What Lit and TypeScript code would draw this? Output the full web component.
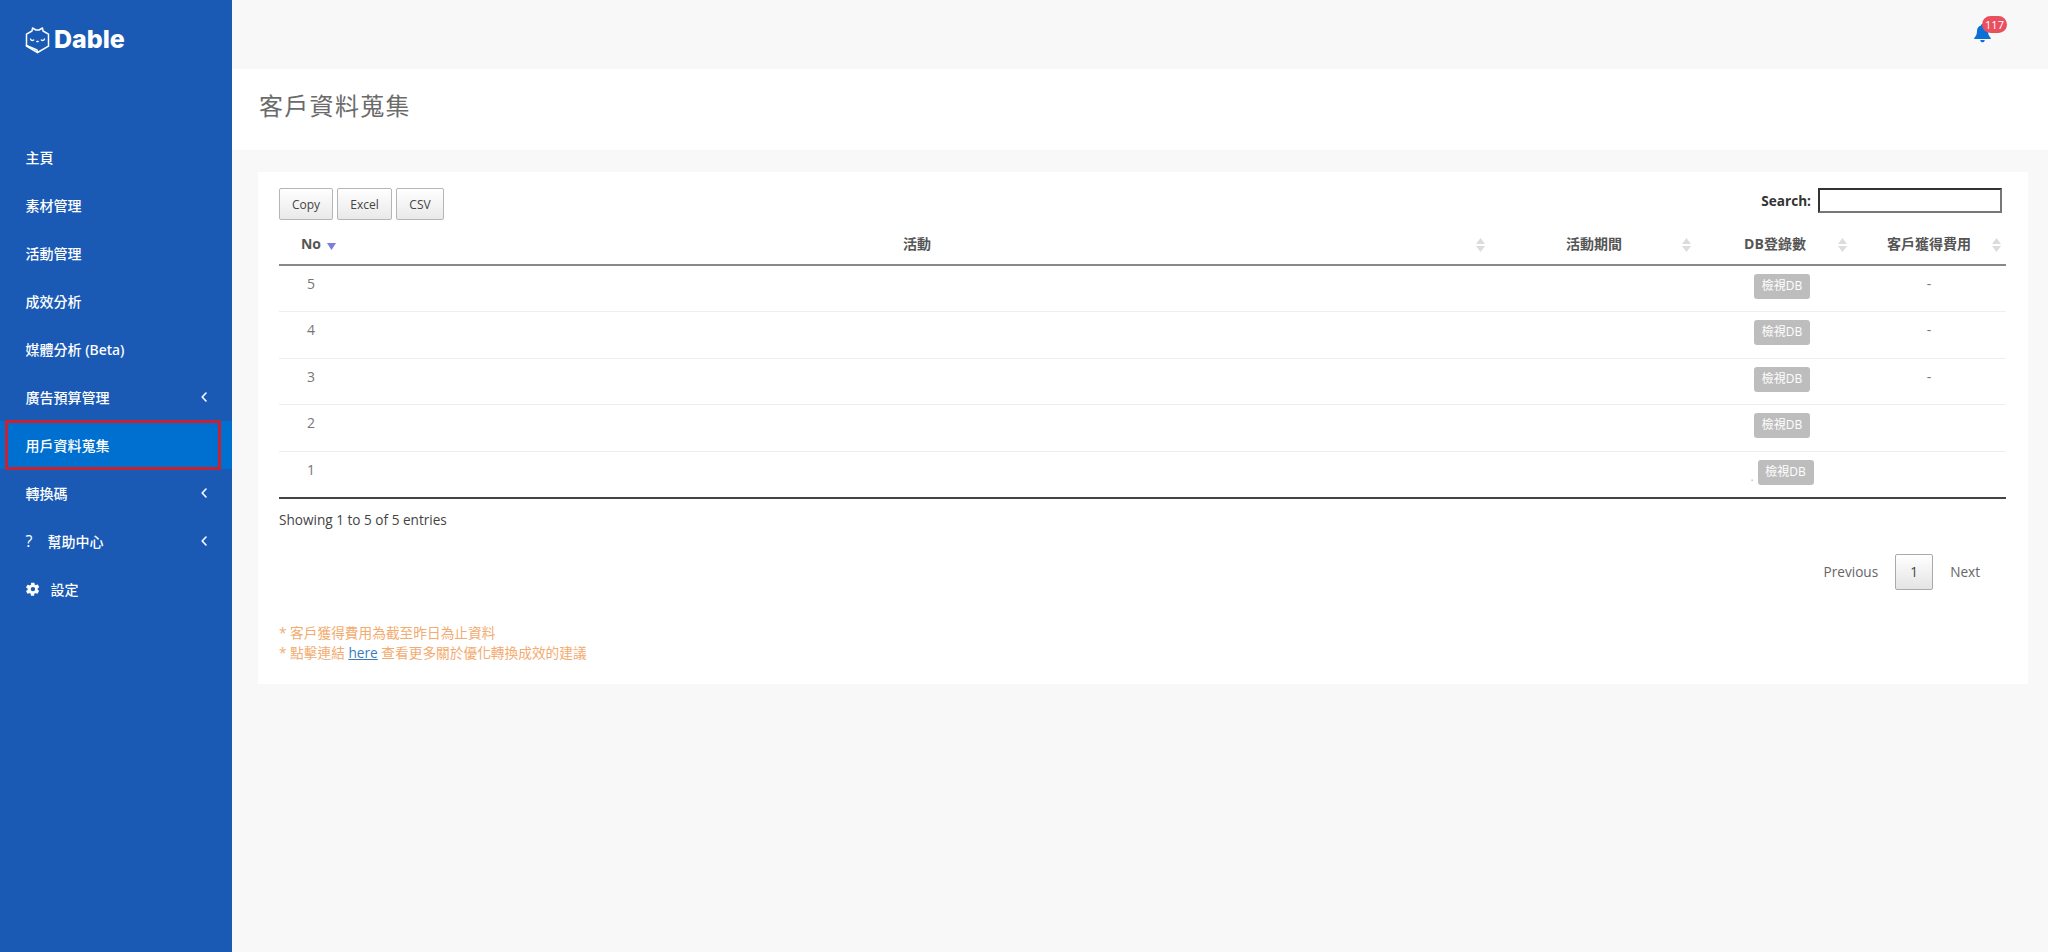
import { LitElement, html, css, svg } from "lit";
import { customElement } from "lit/decorators.js";

const chevron = html`<svg class="chev" viewBox="0 0 6 10" width="6" height="10"><path d="M5 1 1.2 5 5 9" fill="none" stroke="#fff" stroke-width="1.6" stroke-linecap="round" stroke-linejoin="round"/></svg>`;
const gear = html`<svg class="gear" viewBox="0 0 24 24" width="14" height="14"><path fill="#fff" fill-rule="evenodd" d="M22.2 14.6 20 13.4a8.600 8.600 0 0 0 0-2.800l2.200-1.200c.3-.2.400-.5.300-.8a11 11 0 0 0-2.500-4.200.7.700 0 0 0-.8-.1l-2.200 1.200a8.300 8.300 0 0 0-2.400-1.400V2c0-.3-.2-.6-.5-.6a11.300 11.300 0 0 0-4.900 0c-.3 0-.5.300-.5.600v2.500a8.300 8.300 0 0 0-2.400 1.400L3.600 4.700a.7.700 0 0 0-.8.100A11 11 0 0 0 .3 9c-.1.300 0 .6.300.8L2.800 11a8.600 8.600 0 0 0 0 2.800L.6 15c-.3.200-.4.500-.3.800a11 11 0 0 0 2.500 4.200c.2.200.5.300.8.100l2.200-1.200a8.300 8.300 0 0 0 2.400 1.400v2.500c0 .3.200.6.500.6 1.600.4 3.300.4 4.900 0 .3 0 .5-.3.500-.6v-2.500a8.300 8.300 0 0 0 2.400-1.400l2.200 1.200c.3.200.6.100.8-.1a11 11 0 0 0 2.500-4.200c.1-.3 0-.6-.3-.8ZM11.900 16a3.800 3.800 0 1 1 0-7.600 3.800 3.800 0 0 1 0 7.600Z"/></svg>`;
const sortBoth = svg`<path d="M4.500 0 9 6H0Z" fill="#dcdcdc"/><path d="M4.500 14 0 8h9Z" fill="#dcdcdc"/>`;
const sortDesc = svg`<path d="M4.500 7 0 0h9Z" fill="#7d7ddb"/>`;

interface Row { n: number; fee: string; dot?: boolean; }
const rows: Row[] = [
  { n: 5, fee: "-" },
  { n: 4, fee: "-" },
  { n: 3, fee: "-" },
  { n: 2, fee: "" },
  { n: 1, fee: "", dot: true },
];

@customElement("app-root")
export class AppRoot extends LitElement {
  static styles = css`
    :host {
      display: flex;
      width: 2048px;
      height: 952px;
      overflow: hidden;
      background: #f8f8f8;
      font-family: "Open Sans", "Noto Sans CJK TC", sans-serif;
      color: #555;
    }
    .side {
      width: 232px;
      flex: none;
      background: #1a5ab5;
      color: #fff;
      display: flex;
      flex-direction: column;
      font-family: "Noto Sans", "Noto Sans CJK TC", sans-serif;
    }
    .logo {
      height: 132.500px;
      padding: 26px 0 0 25px;
      box-sizing: border-box;
      display: flex;
      align-items: flex-start;
      gap: 4px;
      flex: none;
    }
    .logo span {
      font-family: Inter, sans-serif;
      font-weight: 800;
      font-size: 25px;
      line-height: 26px;
      letter-spacing: 0;
    }
    .item {
      height: 48px;
      box-sizing: border-box;
      display: flex;
      align-items: center;
      padding: 0 25px 0 25.500px;
      font-size: 14px;
      font-weight: 500;
      position: relative;
      flex: none;
    }
    .item .label { flex: 1; }
    .item.active { background: #0070d0; }
    .item.active::after {
      content: "";
      position: absolute;
      left: 5px;
      right: 11px;
      top: -1px;
      bottom: -1px;
      border: 3px solid #c62231;
    }
    .q { width: 22px; font-size: 16px; font-family: "Open Sans", sans-serif; }
    .gear { margin-right: 11px; }
    .main { flex: 1; display: flex; flex-direction: column; min-width: 0; }
    .top {
      height: 69px;
      flex: none;
      box-sizing: border-box;
      display: flex;
      justify-content: flex-end;
      padding: 16px 40px 0 0;
    }
    .bell { position: relative; width: 34px; height: 30px; }
    .bell svg { position: absolute; left: 0; top: 8px; }
    .badge {
      position: absolute;
      left: 8px;
      top: 0;
      width: 25px;
      height: 17px;
      border-radius: 9px;
      background: #e8505f;
      color: #fff;
      font-size: 11px;
      line-height: 17px;
      text-align: center;
    }
    .head {
      height: 81px;
      flex: none;
      background: #fff;
      box-sizing: border-box;
      padding: 0 0 8px 27px;
      display: flex;
      align-items: center;
    }
    h1 {
      margin: 0;
      font-size: 24px;
      font-weight: 400;
      letter-spacing: 1.300px;
      color: #6b6b6b;
      line-height: 1;
    }
    .content { padding: 22px 20px 0 26px; }
    .card {
      background: #fff;
      height: 512px;
      box-sizing: border-box;
      padding: 16px 22px 0 21px;
      font-size: 14px;
    }
    .tools {
      display: flex;
      justify-content: space-between;
      height: 37px;
      padding-right: 4px;
    }
    .btns { display: flex; gap: 4px; }
    .btn {
      height: 32px;
      box-sizing: border-box;
      border: 1px solid #b5b5b5;
      border-radius: 2px;
      background: linear-gradient(#fff, #e9e9e9);
      font-size: 12px;
      color: #444;
      display: flex;
      align-items: center;
      justify-content: center;
    }
    .b1 { width: 54px; }
    .b2 { width: 55px; }
    .b3 { width: 48px; }
    .search { display: flex; align-items: flex-start; gap: 7px; font-weight: 700; color: #333; font-size: 13.600px; }
    .search label { line-height: 25px; }
    .search input {
      width: 184px;
      height: 25px;
      box-sizing: border-box;
      border: 2px solid;
      border-color: #333 #777 #777 #333;
      background: #fff;
      padding: 0;
      margin: 0;
    }
    table {
      width: 1727px;
      border-collapse: collapse;
      table-layout: fixed;
    }
    .w0 { width: 73px; }
    .w1 { width: 1138px; }
    .w2 { width: 222px; }
    .w3 { width: 140px; }
    .w4 { width: 154px; }
    th {
      height: 40px;
      box-sizing: border-box;
      position: relative;
      font-size: 14px;
      font-weight: 700;
      color: #555;
      text-align: center;
      padding: 0 0 3px;
      border-bottom: 2px solid #888;
    }
    th svg { position: absolute; top: 13px; }
    .c0 { padding-right: 9px; }
    .c0 svg { left: 48px; top: 18px; }
    .c1 { padding-right: 8px; }
    .c1 svg { right: 5px; }
    .c2 { padding-right: 14px; }
    .c2 svg { right: 21px; }
    .c3 { padding-right: 14px; }
    .c3 svg { right: 5px; }
    .c4 svg { right: 5px; }
    td {
      height: 46.500px;
      box-sizing: border-box;
      padding: 8px 0 0;
      vertical-align: top;
      text-align: center;
      color: #777;
      font-size: 14px;
      line-height: 19px;
      border-bottom: 1px solid #eee;
    }
    tbody tr:last-child td { border-bottom: 2px solid #444; }
    .num { padding-right: 9px; }
    .fee { padding: 9px 0 0 0; line-height: 18px; }
    .view {
      display: inline-block;
      width: 56px;
      height: 25px;
      box-sizing: border-box;
      background: #bdbdbd;
      color: #fff;
      border-radius: 3px;
      font-size: 12px;
      line-height: 24px;
      text-align: center;
      vertical-align: top;
    }
    .dot { color: #bbb; font-size: 12px; line-height: 34px; margin-right: 4px; }
    .info { font-size: 13.600px; color: #444; margin-top: 11px; line-height: 20px; }
    .pager {
      display: flex;
      justify-content: flex-end;
      align-items: center;
      height: 36px;
      margin-top: 24px;
      padding-right: 26px;
      color: #666;
      font-size: 13.600px;
    }
    .pager .cur {
      width: 38px;
      height: 36px;
      box-sizing: border-box;
      border: 1px solid #aaa;
      border-radius: 2px;
      background: linear-gradient(#fff, #e4e4e4);
      display: flex;
      align-items: center;
      justify-content: center;
      margin: 0 17px;
      color: #444;
    }
    .notes { margin-top: 33px; color: #f3ab70; font-size: 13.700px; line-height: 20px; }
    .notes a { color: #3b7cc0; text-decoration: underline; }
  `;

  render() {
    const menu = ["主頁", "素材管理", "活動管理", "成效分析", "媒體分析 (Beta)"];
    const headers = ["No", "活動", "活動期間", "DB登錄數", "客戶獲得費用"];
    return html`
      <aside class="side">
        <div class="logo">
          <svg width="25" height="28" viewBox="0 0 25 28" fill="none" stroke="#fff" stroke-width="1.500" stroke-linejoin="round" stroke-linecap="round">
            <path d="M7 5 7.500 2 11 4h3l3.500-2L18 5l5.500 3.200v12L12.500 26.500 1.500 20.200v-12Z"/>
            <path d="M1.500 19.500 12 24l.5 2.500"/>
            <path d="M5.500 13c.5 1.500 2 2 3.200 1M19.500 13c-.5 1.500-2 2-3.200 1M11.800 15.500h1.400" stroke-width="1.300"/>
          </svg>
          <span>Dable</span>
        </div>
        ${menu.map((m) => html`<div class="item"><span class="label">${m}</span></div>`)}
        <div class="item"><span class="label">廣告預算管理</span>${chevron}</div>
        <div class="item active"><span class="label">用戶資料蒐集</span></div>
        <div class="item"><span class="label">轉換碼</span>${chevron}</div>
        <div class="item"><span class="q">?</span><span class="label">幫助中心</span>${chevron}</div>
        <div class="item">${gear}<span class="label">設定</span></div>
      </aside>
      <div class="main">
        <div class="top">
          <div class="bell">
            <svg width="17" height="19" viewBox="0 0 17 19"><path fill="#0a6fd6" d="M8.500 0c1 0 1.500.7 1.500 1.500C12.600 2 14 4.300 14 7c0 3.500 1 5 2.700 7 .3.500 0 1-.6 1H.9c-.6 0-.9-.5-.6-1C2 12 3 10.500 3 7c0-2.700 1.400-5 4-5.500C7 .7 7.500 0 8.500 0ZM6.300 16h4.400c0 1.400-1 2.300-2.200 2.300S6.300 17.400 6.300 16Z"/></svg>
            <span class="badge">117</span>
          </div>
        </div>
        <div class="head"><h1>客戶資料蒐集</h1></div>
        <div class="content">
          <div class="card">
            <div class="tools">
              <div class="btns">
                <div class="btn b1">Copy</div>
                <div class="btn b2">Excel</div>
                <div class="btn b3">CSV</div>
              </div>
              <div class="search"><label>Search:</label><input type="text" /></div>
            </div>
            <table>
              <colgroup>
                <col class="w0" /><col class="w1" /><col class="w2" /><col class="w3" /><col class="w4" />
              </colgroup>
              <thead>
                <tr>
                  ${headers.map((h, i) => html`<th class="c${i}">${h}<svg width="9" height="14" viewBox="0 0 9 14">${i === 0 ? sortDesc : sortBoth}</svg></th>`)}
                </tr>
              </thead>
              <tbody>
                ${rows.map((r) => html`
                  <tr>
                    <td class="num">${r.n}</td>
                    <td></td>
                    <td></td>
                    <td>${r.dot ? html`<span class="dot">.</span>` : ""}<span class="view">檢視DB</span></td>
                    <td class="fee">${r.fee}</td>
                  </tr>
                `)}
              </tbody>
            </table>
            <div class="info">Showing 1 to 5 of 5 entries</div>
            <div class="pager"><span>Previous</span><span class="cur">1</span><span>Next</span></div>
            <div class="notes">
              <div>* 客戶獲得費用為截至昨日為止資料</div>
              <div>* 點擊連結 <a href="#">here</a> 查看更多關於優化轉換成效的建議</div>
            </div>
          </div>
        </div>
      </div>
    `;
  }
}
